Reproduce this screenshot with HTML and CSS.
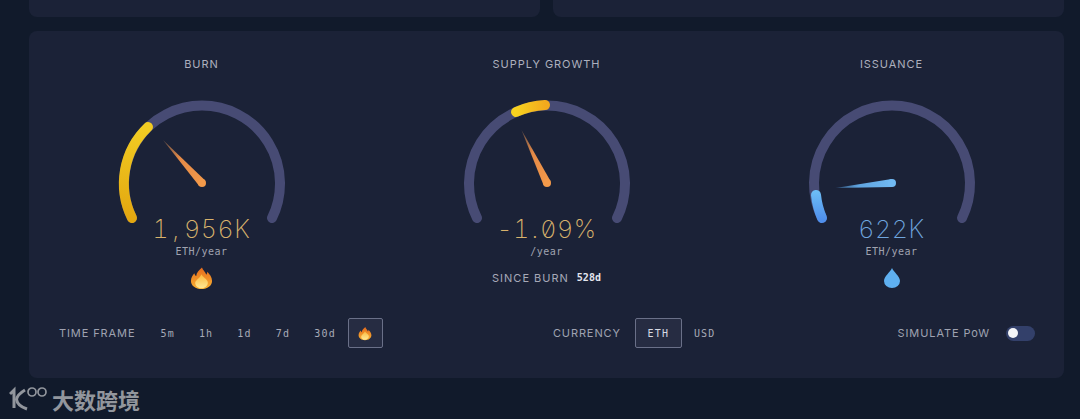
FILE: index.html
```html
<!DOCTYPE html>
<html lang="en">
<head>
<meta charset="utf-8">
<title>Burn dashboard</title>
<link rel="stylesheet" href="styles.css">
</head>
<body>
<svg class="defs" aria-hidden="true">
  <defs>
    <linearGradient id="burnFill" gradientUnits="userSpaceOnUse" x1="0" y1="30" x2="0" y2="118"><stop offset="0" stop-color="#f1cb22"/><stop offset="1" stop-color="#e3a710"/></linearGradient>
    <linearGradient id="supplyFill" gradientUnits="userSpaceOnUse" x1="52" y1="0" x2="82" y2="0"><stop offset="0" stop-color="#f7d21f"/><stop offset="1" stop-color="#f2a91d"/></linearGradient>
    <linearGradient id="issueFill" gradientUnits="userSpaceOnUse" x1="0" y1="92" x2="0" y2="120"><stop offset="0" stop-color="#6cbcf5"/><stop offset="1" stop-color="#4f8fec"/></linearGradient>
    <linearGradient id="needleOrange" gradientUnits="objectBoundingBox" x1="1" y1="1" x2="0" y2="0"><stop offset="0" stop-color="#f49a4a"/><stop offset=".6" stop-color="#e58a47"/><stop offset="1" stop-color="#5c4a46"/></linearGradient>
    <linearGradient id="needleBlue" gradientUnits="objectBoundingBox" x1="1" y1="0" x2="0" y2="0"><stop offset="0" stop-color="#70b9f2"/><stop offset=".6" stop-color="#5fa4e0"/><stop offset="1" stop-color="#2c4a70"/></linearGradient>
    <linearGradient id="flameOuter" x1="0" y1="0" x2="0" y2="1"><stop offset="0" stop-color="#e46a1c"/><stop offset="1" stop-color="#f9b233"/></linearGradient>
    <linearGradient id="flameInner" x1="0" y1="0" x2="0" y2="1"><stop offset="0" stop-color="#fab83a"/><stop offset="1" stop-color="#ffe996"/></linearGradient>
    <symbol id="flame" viewBox="0 0 24 24">
      <path fill="url(#flameOuter)" d="M12.500 1C13.500 4 16 5.500 17 8.500C17.800 7.500 18 6.500 18 5.500C20.500 8 23 11 23 15C23 20 18 23.500 12 23.500C6 23.500 1 20 1 15C1 11.500 3 9 4.500 7C5 8.500 5.500 9.500 6.500 10C6.500 6.500 9.500 3.500 12.500 1Z"/>
      <path fill="url(#flameInner)" d="M12 8C13 11 17.500 12.500 18.500 16C19.200 20 15.500 22.800 12 22.800C8 22.800 5 20 5.500 16.500C6 14 10.500 12 12 8Z"/>
    </symbol>
  </defs>
</svg>

<div class="page">
  <div class="top-row">
    <div class="top-card"></div>
    <div class="top-card"></div>
  </div>

  <section class="panel">
    <div class="gauges">
      <div class="gauge">
        <h2 class="gauge-title">BURN</h2>
        <svg class="dial" viewBox="0 0 166 116" aria-hidden="true">
          <path class="track" d="M13 118A78 78 0 1 1 153 118"/>
          <path class="fill" stroke="url(#burnFill)" d="M13 118A78 78 0 0 1 29 27"/>
          <polygon fill="url(#needleOrange)" points="85.960,80.310 80.040,85.690 44,40"/>
          <circle cx="83" cy="83" r="4" fill="#f49a4a"/>
        </svg>
        <div class="value value-gold">1<span class="comma">,</span>956K</div>
        <div class="unit">ETH/year</div>
        <svg class="flame-icon"><use href="#flame"/></svg>
      </div>

      <div class="gauge">
        <h2 class="gauge-title">SUPPLY GROWTH</h2>
        <svg class="dial" viewBox="0 0 166 116" aria-hidden="true">
          <path class="track" d="M13 118A78 78 0 1 1 153 118"/>
          <path class="fill" stroke="url(#supplyFill)" d="M52 12A78 78 0 0 1 81 5"/>
          <polygon fill="url(#needleOrange)" points="86.600,81.260 79.400,84.740 57.500,30"/>
          <circle cx="83" cy="83" r="4" fill="#f49a4a"/>
        </svg>
        <div class="value value-gold">-1<span class="dot">.</span>09%</div>
        <div class="unit">/year</div>
        <div class="since"><span>SINCE BURN</span><strong>528d</strong></div>
      </div>

      <div class="gauge">
        <h2 class="gauge-title">ISSUANCE</h2>
        <svg class="dial" viewBox="0 0 166 116" aria-hidden="true">
          <path class="track" d="M13 118A78 78 0 1 1 153 118"/>
          <path class="fill" stroke="url(#issueFill)" d="M13 118A78 78 0 0 1 7 95"/>
          <polygon fill="url(#needleBlue)" points="83.350,86.980 82.650,79.020 26.500,88"/>
          <circle cx="83" cy="83" r="4" fill="#70b9f2"/>
        </svg>
        <div class="value value-blue">622K</div>
        <div class="unit">ETH/year</div>
        <svg class="drop-icon" viewBox="0 0 16 20" aria-hidden="true"><path d="M8 0C9.500 3.500 16 8.500 16 13A8 7 0 0 1 0 13C0 8.500 6.500 3.500 8 0Z"/></svg>
      </div>
    </div>

    <div class="controls">
      <div class="control-group">
        <span class="label">TIME FRAME</span>
        <div class="options">
          <button class="opt">5m</button>
          <button class="opt">1h</button>
          <button class="opt">1d</button>
          <button class="opt">7d</button>
          <button class="opt">30d</button>
          <button class="opt opt-active opt-flame"><svg class="flame-small"><use href="#flame"/></svg></button>
        </div>
      </div>
      <div class="control-group control-currency">
        <span class="label">CURRENCY</span>
        <div class="options">
          <button class="opt opt-active opt-wide">ETH</button>
          <button class="opt">USD</button>
        </div>
      </div>
      <div class="control-group control-sim">
        <span class="label">SIMULATE PoW</span>
        <span class="toggle"><span class="knob"></span></span>
      </div>
    </div>
  </section>
</div>

<div class="watermark">
  <svg class="wm-logo" viewBox="0 0 40 26" aria-hidden="true">
    <path class="wm-heavy" d="M1 8L5 4V22"/>
    <path class="wm-heavy" d="M16 4C11 7 8 10 7.500 13.500C8 17 12 21 18 23"/>
    <circle cx="23" cy="6" r="4"/>
    <circle cx="33" cy="6" r="4"/>
  </svg>
  <span class="wm-text">大数跨境</span>
</div>
</body>
</html>
```
FILE: styles.css
```css
* { box-sizing: border-box; }

html, body {
  margin: 0;
  padding: 0;
  height: 100%;
}

body {
  background: #111a2b;
  overflow: hidden;
  font-family: "Inter", "Liberation Sans", sans-serif;
  color: #a6a9b8;
  position: relative;
}

.defs {
  position: absolute;
  width: 0;
  height: 0;
}

.page {
  padding: 0 16px 0 29px;
  display: flex;
  flex-direction: column;
  gap: 14px;
}

.top-row {
  display: grid;
  grid-template-columns: 1fr 1fr;
  gap: 13px;
  height: 17px;
}

.top-card {
  background: #1b2237;
  border-radius: 0 0 8px 8px;
}

.panel {
  background: #1b2237;
  border-radius: 8px;
  height: 347px;
  display: flex;
  flex-direction: column;
  justify-content: space-between;
  padding-bottom: 30px;
}

.gauges {
  display: grid;
  grid-template-columns: repeat(3, 1fr);
}

.gauge {
  display: flex;
  flex-direction: column;
  align-items: center;
  padding-top: 26px;
}

.gauge-title {
  margin: 0 0 29px;
  font-size: 11px;
  font-weight: 400;
  line-height: 14px;
  letter-spacing: .95px;
  color: #adb0be;
}

.dial {
  width: 166px;
  height: 116px;
  overflow: visible;
}

.track, .fill {
  fill: none;
  stroke-width: 10;
  stroke-linecap: round;
}

.track { stroke: #474b74; }

.value {
  font-family: "Inter", "Roboto", sans-serif;
  font-size: 25px;
  font-weight: 250;
  font-variant-numeric: tabular-nums slashed-zero;
  line-height: 26px;
  letter-spacing: .6px;
  height: 26px;
}

.comma { letter-spacing: 5px; margin-left: 3px; }
.dot { margin: 0 1.500px; }

.value-gold { color: #d8b26c; }
.value-blue { color: #6fa5de; }

.unit {
  font-family: "DejaVu Sans Mono", monospace;
  font-size: 10px;
  line-height: 14px;
  letter-spacing: .5px;
  color: #a0a3b0;
  margin-top: 3px;
}

.flame-icon {
  width: 23px;
  height: 24px;
  margin-top: 7px;
}

.drop-icon {
  width: 16px;
  height: 20px;
  margin-top: 9px;
  fill: #5fb0f0;
}

.since {
  display: flex;
  gap: 8px;
  align-items: center;
  margin-top: 12px;
  font-size: 11px;
  line-height: 14px;
  letter-spacing: 1px;
  color: #a6a9b8;
}

.since strong {
  font-family: "DejaVu Sans Mono", monospace;
  font-size: 10px;
  font-weight: 700;
  letter-spacing: 0;
  color: #e4e6ee;
}

.controls {
  display: flex;
  justify-content: space-between;
  align-items: center;
  padding: 0 29px 0 30px;
}

.control-group {
  display: flex;
  align-items: center;
  gap: 13px;
}

.control-currency { gap: 14px; }
.control-sim { gap: 16px; }

.label {
  font-size: 11px;
  letter-spacing: .9px;
  color: #9fa2b1;
  white-space: nowrap;
}

.options {
  display: flex;
  align-items: center;
}

.opt {
  height: 30px;
  padding: 0 11px;
  border: 1px solid transparent;
  border-radius: 2px;
  background: none;
  font-family: "DejaVu Sans Mono", monospace;
  font-size: 10px;
  letter-spacing: 1.200px;
  color: #a8abb8;
  display: flex;
  align-items: center;
  justify-content: center;
}

.opt-active {
  background: #262c42;
  border-color: #6a7088;
  color: #d7dae4;
}

.opt-wide { width: 47px; }

.opt-flame {
  width: 35px;
  padding: 0;
}

.flame-small {
  width: 14px;
  height: 15px;
}

.toggle {
  width: 29px;
  height: 15px;
  border-radius: 8px;
  background: #33406a;
  display: flex;
  align-items: center;
  padding-left: 2px;
}

.knob {
  width: 10px;
  height: 10px;
  border-radius: 50%;
  background: #f4f5f8;
}

.watermark {
  position: absolute;
  left: 9px;
  top: 386px;
  display: flex;
  align-items: center;
  gap: 3px;
  color: #92969d;
}

.wm-logo {
  width: 40px;
  height: 26px;
  fill: none;
  stroke: #92969d;
  stroke-width: 1.700;
}

.wm-heavy { stroke-width: 3; }

.wm-text {
  font-family: "Noto Sans CJK SC", sans-serif;
  font-size: 22px;
  font-weight: 700;
  line-height: 26px;
}
```
